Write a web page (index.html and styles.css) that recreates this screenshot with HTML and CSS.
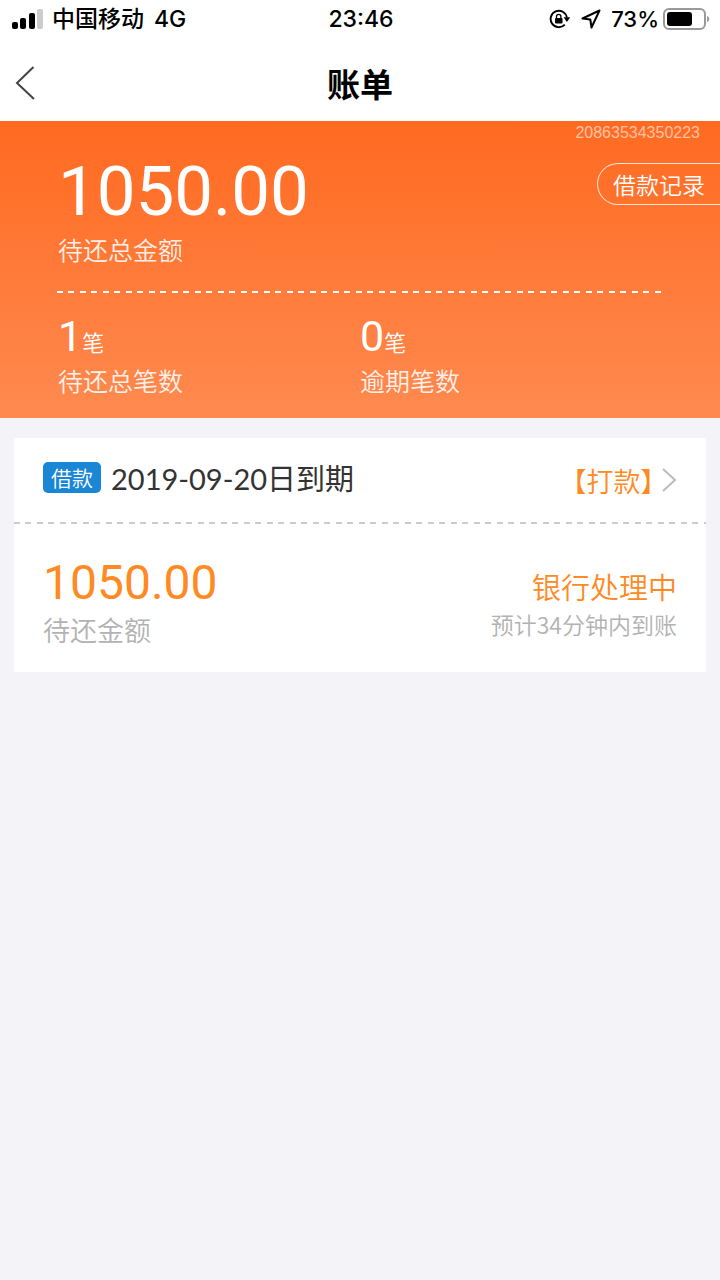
FILE: index.html
```html
<!DOCTYPE html>
<html lang="zh-CN">
<head>
  <meta charset="UTF-8">
  <title>账单</title>
  <meta name="viewport" content="width=device-width, initial-scale=1.0">
  <link rel="stylesheet" href="styles.css">
</head>
<body>
  <!-- Status bar -->
  <div class="status-bar">
    <div class="status-left">
      <svg class="signal" width="32" height="22" viewBox="0 0 32 22">
        <rect x="0" y="14" width="6" height="7" rx="2"/>
        <rect x="8" y="10" width="6" height="11" rx="2"/>
        <rect x="17" y="5" width="6" height="16" rx="2"/>
        <rect x="25" y="1" width="6" height="20" rx="2" fill="#ccc"/>
      </svg>
      <span>中国移动</span>
      <span class="network">4G</span>
    </div>
    <div class="status-time">23:46</div>
    <div class="status-right">
      <svg width="22" height="20" viewBox="0 0 22 20">
        <path d="M15.8 15.6 A8.200 8.200 0 1 1 17.900 8.500" fill="none" stroke="#000" stroke-width="1.900"/>
        <path d="M14.600 8.300h6.600l-3.300 4.700z"/>
        <rect x="6" y="9" width="7.500" height="5.500" rx="1"/>
        <path d="M7.500 9.500V7.500a2.200 2.200 0 0 1 4.400 0V9.500" fill="none" stroke="#000" stroke-width="1.300"/>
      </svg>
      <svg class="location" width="20" height="20" viewBox="0 0 20 20">
        <path d="M18.500 1.500L1.500 9.500l7.800 1 1.200 8z" fill="none" stroke="#000" stroke-width="2" stroke-linejoin="round"/>
      </svg>
      <span class="percent">73%</span>
      <svg class="battery" width="47" height="22" viewBox="0 0 47 22">
        <rect x="1" y="1" width="41" height="20" rx="5" fill="none" stroke="#999" stroke-width="2"/>
        <rect x="4" y="4" width="25" height="14" rx="3"/>
        <path d="M44 8c3 1 3 5 0 6z" fill="#999"/>
      </svg>
    </div>
  </div>

  <header class="nav-bar">
    <button class="back" type="button" aria-label="返回">
      <svg width="20" height="34" viewBox="0 0 20 34">
        <path d="M18.500 1L2 17l17 16" fill="none" stroke="#444" stroke-width="2"/>
      </svg>
    </button>
    <h1>账单</h1>
  </header>

  <!-- Total owed -->
  <section class="summary">
    <div class="serial">20863534350223</div>
    <div class="total-row">
      <div class="total">
        <div class="total-amount">1050.00</div>
        <div class="label">待还总金额</div>
      </div>
      <a class="history" href="#">借款记录</a>
    </div>
    <div class="dash dash-light"></div>
    <div class="counts">
      <div class="count">
        <div class="count-value"><span class="number">1</span>笔</div>
        <div class="label">待还总笔数</div>
      </div>
      <div class="count">
        <div class="count-value"><span class="number">0</span>笔</div>
        <div class="label">逾期笔数</div>
      </div>
    </div>
  </section>

  <!-- Bill -->
  <main class="bill">
    <div class="bill-head">
      <div class="bill-title">
        <span class="tag">借款</span>
        <span class="due">2019-09-20日到期</span>
      </div>
      <a class="pay" href="#">【打款】
        <svg width="15" height="26" viewBox="0 0 15 26">
          <path d="M1 2l12 11L1 24" fill="none" stroke="#bbb" stroke-width="2"/>
        </svg>
      </a>
    </div>
    <div class="dash dash-grey"></div>
    <div class="bill-body">
      <div>
        <div class="bill-amount">1050.00</div>
        <div class="bill-label">待还金额</div>
      </div>
      <div class="bill-state">
        <div class="state">银行处理中</div>
        <div class="eta">预计34分钟内到账</div>
      </div>
    </div>
  </main>
</body>
</html>
```
FILE: styles.css
```css
* {
  box-sizing: border-box;
}

body {
  margin: 0;
  min-height: 100vh;
  background: #f4f3f8;
  color: #000;
  font-family: "Noto Sans CJK SC", sans-serif;
  font-weight: 350;
}

a {
  text-decoration: none;
}

svg {
  display: block;
  flex: none;
}

.status-bar {
  display: grid;
  grid-template-columns: 1fr auto 1fr;
  align-items: center;
  height: 40px;
  padding: 0 10px 2px 12px;
  background: white;
  font-family: Inter, "Noto Sans CJK SC", sans-serif;
  font-size: 23px;
  font-weight: 500;
  line-height: 38px;
}

.status-left, .status-right {
  display: flex;
  align-items: center;
}

.status-right {
  justify-content: flex-end;
}

.signal {
  margin-right: 8px;
}

.network {
  margin-left: 10px;
}

.location {
  margin: 0 10px;
}

.percent {
  font-size: 22px;
}

.battery {
  margin-left: 4px;
}

.nav-bar {
  display: grid;
  grid-template-columns: 1fr auto 1fr;
  align-items: center;
  height: 81px;
  padding: 4px 15px 0;
  background: white;
}

.nav-bar h1 {
  margin: 0;
  font-size: 33px;
  font-weight: 700;
  line-height: 48px;
}

.back {
  justify-self: start;
  padding: 0;
  border: none;
  background: none;
  cursor: pointer;
}

.summary {
  padding-bottom: 20px;
  background: linear-gradient(#ff6a20, #ff8a50);
  color: white;
}

.serial {
  padding: 2px 20px 0;
  color: rgba(255, 255, 255, 0.6);
  font-family: "Liberation Sans", Arial, sans-serif;
  font-size: 16px;
  line-height: 20px;
  text-align: right;
}

.total-row {
  display: flex;
  justify-content: space-between;
  align-items: flex-start;
  padding: 10px 0 24px 58px;
}

.total-amount {
  font-family: Roboto, Arial, sans-serif;
  font-size: 69px;
  font-weight: 400;
  line-height: 78px;
}

.label {
  color: rgba(255, 255, 255, 0.9);
  font-size: 25px;
  line-height: 36px;
}

.history {
  margin-top: 10px;
  padding: 0 15px;
  border: 1px solid rgba(255, 255, 255, 0.8);
  border-right: none;
  border-radius: 21px 0 0 21px;
  color: white;
  font-size: 23px;
  line-height: 40px;
}

.dash {
  height: 2px;
}

.dash-light {
  margin: 0 57px;
  background: repeating-linear-gradient(90deg, white 0 6px, transparent 6px 11px, white 11px 17px, transparent 17px 23px);
}

.dash-grey {
  background: repeating-linear-gradient(90deg, #ccc 0 6px, transparent 6px 11px, #ccc 11px 17px, transparent 17px 23px);
}

.counts {
  display: grid;
  grid-template-columns: 1fr 1fr;
  padding: 22px 58px 0;
}

.count-value {
  font-size: 22px;
  line-height: 42px;
}

.number {
  font-family: Roboto, sans-serif;
  font-size: 43px;
  font-weight: 400;
}

.bill {
  margin: 20px 14px;
  background: white;
}

.bill-head {
  display: flex;
  justify-content: space-between;
  align-items: center;
  height: 84px;
  padding: 0 29px;
}

.bill-title {
  display: flex;
  align-items: center;
  gap: 10px;
  padding-bottom: 6px;
}

.tag {
  padding: 0 8px;
  border-radius: 5px;
  background: #1986d6;
  color: white;
  font-size: 21px;
  line-height: 31px;
}

.due {
  color: #333;
  font-family: Lato, "Noto Sans CJK SC", sans-serif;
  font-size: 29px;
  font-weight: 400;
}

.pay {
  display: flex;
  align-items: center;
  gap: 8px;
  color: #ff8a24;
  font-size: 27px;
  font-feature-settings: "halt";
}

.bill-body {
  display: flex;
  justify-content: space-between;
  padding: 31px 29px 23px;
}

.bill-amount {
  color: #ff8a24;
  font-family: Roboto, Arial, sans-serif;
  font-size: 48px;
  font-weight: 400;
  line-height: 56px;
}

.bill-label {
  color: #b2b2b2;
  font-size: 27px;
  line-height: 38px;
}

.bill-state {
  padding-top: 10px;
  text-align: right;
}

.state {
  color: #ff8a24;
  font-size: 29px;
  line-height: 42px;
}

.eta {
  color: #b2b2b2;
  font-size: 23px;
  line-height: 34px;
}
```
